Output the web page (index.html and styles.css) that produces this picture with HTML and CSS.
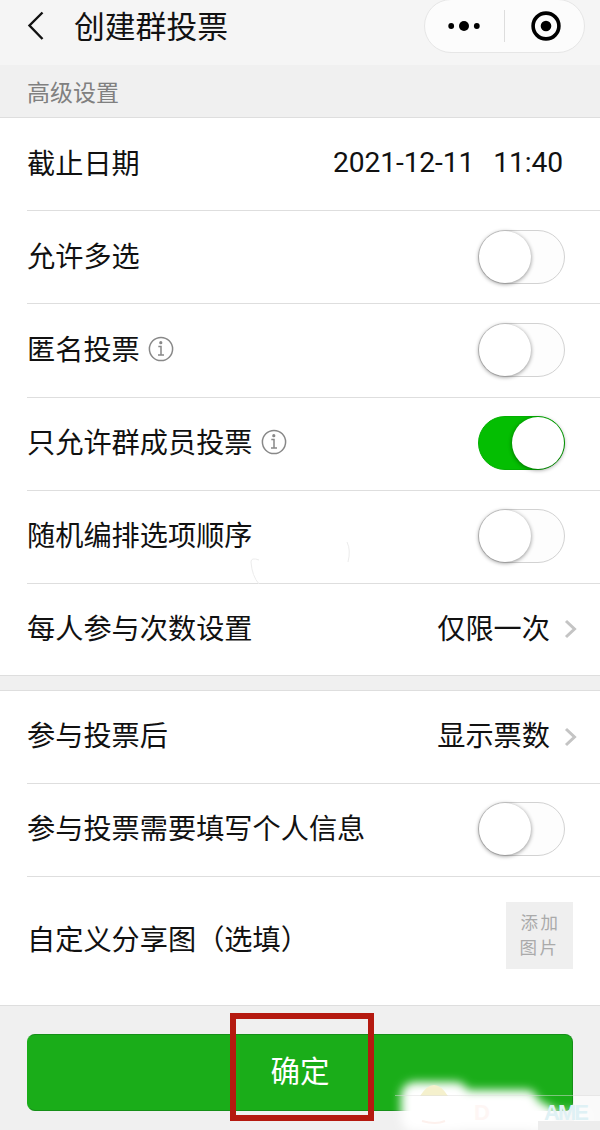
FILE: index.html
```html
<!DOCTYPE html>
<html lang="zh-CN">
<head>
    <meta charset="UTF-8">
    <meta name="viewport" content="width=device-width, initial-scale=1.0">
    <title>创建群投票</title>
    <link rel="stylesheet" href="styles.css">
</head>
<body>
    <div class="page">
        <header class="navbar">
            <svg class="back" width="18" height="30" viewBox="0 0 18 30"><path d="M15.5 1.5 L2.5 14.5 L15.5 28" fill="none" stroke="#111" stroke-width="2.4"/></svg>
            <h1>创建群投票</h1>
            <div class="capsule">
                <svg width="32" height="12" viewBox="0 0 32 12"><circle cx="3.2" cy="6" r="2.9"/><circle cx="16" cy="6" r="5"/><circle cx="28.8" cy="6" r="2.9"/></svg>
                <span class="capsule-line"></span>
                <svg width="30" height="30" viewBox="0 0 30 30"><circle cx="15" cy="15" r="12.9" fill="none" stroke="#000" stroke-width="3.6"/><circle cx="15" cy="15" r="5.3"/></svg>
            </div>
        </header>

        <div class="section-title">高级设置</div>
        <div class="group">
            <div class="row">
                <span class="label">截止日期</span>
                <span class="date"><span>2021-12-11</span><span>11:40</span></span>
            </div>
            <div class="row">
                <span class="label">允许多选</span>
                <span class="switch"></span>
            </div>
            <div class="row">
                <span class="label">匿名投票</span>
                <svg class="info" width="26" height="26" viewBox="0 0 26 26"><circle cx="13" cy="13" r="11.6"/><path d="M10.3 10.5h2.7v8.5M10 19h6"/><circle class="dot" cx="12.8" cy="6.7" r="1.6"/></svg>
                <span class="switch"></span>
            </div>
            <div class="row">
                <span class="label">只允许群成员投票</span>
                <svg class="info" width="26" height="26" viewBox="0 0 26 26"><circle cx="13" cy="13" r="11.6"/><path d="M10.3 10.5h2.7v8.5M10 19h6"/><circle class="dot" cx="12.8" cy="6.7" r="1.6"/></svg>
                <span class="switch on"></span>
            </div>
            <div class="row">
                <span class="label">随机编排选项顺序</span>
                <span class="switch"></span>
            </div>
            <div class="row link">
                <span class="label">每人参与次数设置</span>
                <span class="value">仅限一次</span>
                <svg class="arrow" width="14" height="20" viewBox="0 0 14 20"><path d="M2 2l8.5 8L2 18"/></svg>
            </div>
        </div>

        <div class="group second">
            <div class="row link">
                <span class="label">参与投票后</span>
                <span class="value">显示票数</span>
                <svg class="arrow" width="14" height="20" viewBox="0 0 14 20"><path d="M2 2l8.5 8L2 18"/></svg>
            </div>
            <div class="row">
                <span class="label">参与投票需要填写个人信息</span>
                <span class="switch"></span>
            </div>
            <div class="row share">
                <span class="label">自定义分享图（选填）</span>
                <span class="add-pic">添加<br>图片</span>
            </div>
        </div>

        <div class="footer">
            <button class="submit">确定</button>
        </div>

        <!-- faint mark over the list -->
        <svg class="smudge" width="130" height="70" viewBox="0 0 130 70" fill="none" stroke="#ececec">
            <path d="M18 20q-8-3-8 2q1 14 8 22M106 2q4 8 1 20" stroke-width="1"/>
        </svg>

        <div class="mark"></div>

        <svg class="cloud" width="230" height="80" viewBox="0 0 230 80">
            <defs>
                <filter id="soft" x="-20%" y="-50%" width="140%" height="200%"><feGaussianBlur stdDeviation="5"/></filter>
            </defs>
            <rect x="204" y="46" width="26" height="26" fill="#fafafa"/>
            <g fill="#fff" filter="url(#soft)">
                <rect x="31" y="32" width="68" height="50" rx="14"/>
                <rect x="80" y="40" width="88" height="40" rx="12"/>
                <path d="M160 46l26 14v22h-26z"/>
                <rect x="180" y="60" width="40" height="14" opacity=".6"/>
            </g>
            <path d="M50 46q14-22 28 0z" fill="#f5f1cd"/>
            <path d="M25 45.5H230" stroke="#ddd" stroke-opacity=".5"/>
            <rect x="168" y="71" width="62" height="9" fill="#ededed"/>
            <path d="M52 71q14 4 23 0" fill="none" stroke="#fdf1ed" stroke-width="2"/>
            <text x="104" y="70" fill="#fef6f4">D</text>
            <text x="174" y="70" fill="#dff1f5" textLength="45">AME</text>
        </svg>
    </div>
</body>
</html>
```
FILE: styles.css
```css
* { box-sizing: border-box; }
body { margin: 0; font-family: Roboto, "Noto Sans CJK SC", sans-serif; background: #f0f0f0; color: #111; }
.page { position: relative; width: 600px; height: 1130px; overflow: hidden; }

.navbar { display: flex; align-items: center; height: 65px; padding: 0 15px 13px 27px; background: #f5f5f5; }
.navbar h1 { margin: 4px 0 0 29px; font-size: 30.8px; font-weight: 400; line-height: 50px; }
.capsule { display: flex; align-items: center; width: 161px; height: 54px; margin-left: auto; padding: 0 23px 0 23px; background: #fcfcfc; border: 1px solid #e6e6e6; border-radius: 27px; }
.capsule-line { width: 1px; height: 32px; margin: 0 26px 0 24px; background: #ddd; }
.capsule svg { flex: none; }

.section-title { height: 52px; padding-left: 27px; font-size: 23px; line-height: 57px; color: #808080; }

.group { background: #fff; border-top: 1px solid #dedede; border-bottom: 1px solid #dedede; padding-left: 27px; }
.second { margin-top: 14px; }
.row { display: flex; align-items: center; height: 93.2px; padding-right: 35px; border-bottom: 1px solid #dedede; font-size: 28.2px; }
.row:last-child { border-bottom: none; height: 91px; }
.second .row { height: 93px; }
.second .row:last-child { height: 128px; }
.row.link { padding-right: 22px; }
.row.share { padding-right: 27px; }
.label, .value { padding-top: 1px; line-height: 40px; white-space: nowrap; }
.date { display: flex; gap: 19px; margin-left: auto; padding: 0 2px 3px 0; font-size: 28.2px; letter-spacing: -0.1px; }
.value { margin-left: auto; }

.info { margin: 0 0 3px 8px; fill: none; stroke: #888; stroke-width: 1.5; }
.info .dot { fill: #888; stroke: none; }
.arrow { margin-left: 14px; fill: none; stroke: #c4c4c4; stroke-width: 3; }

.switch { display: flex; width: 87px; height: 54px; margin: 0 0 1px auto; border: 1px solid #d2d2d2; border-radius: 27px; background: #fdfdfd; }
.switch::before { content: ""; width: 52px; height: 52px; border-radius: 50%; background: #fff; box-shadow: 0 1px 4px rgba(0,0,0,0.45); }
.switch.on { justify-content: flex-end; background: #04be02; border-color: #04b002; }

.add-pic { width: 67px; height: 67px; margin: 0 0 10px auto; padding-top: 9px; background: #efefef; color: #aaa; font-size: 17.5px; line-height: 25px; letter-spacing: 2.5px; text-align: center; text-indent: 2px; }

.footer { padding: 28px 27px 0; }
.submit { display: block; width: 546px; height: 77px; padding: 0 0 7px; border: 1px solid #158f18; border-left-color: #1aad19; border-radius: 8px; background: #1aad19; color: #fff; font-family: inherit; font-size: 29.5px; }

.smudge { position: absolute; left: 241px; top: 540px; }
.mark { position: absolute; left: 230px; top: 1013px; width: 144px; height: 108px; border: 6px solid #b51a10; }
.cloud { position: absolute; left: 370px; top: 1050px; font-family: "Liberation Sans", Arial, sans-serif; font-size: 22px; font-weight: bold; }
```
